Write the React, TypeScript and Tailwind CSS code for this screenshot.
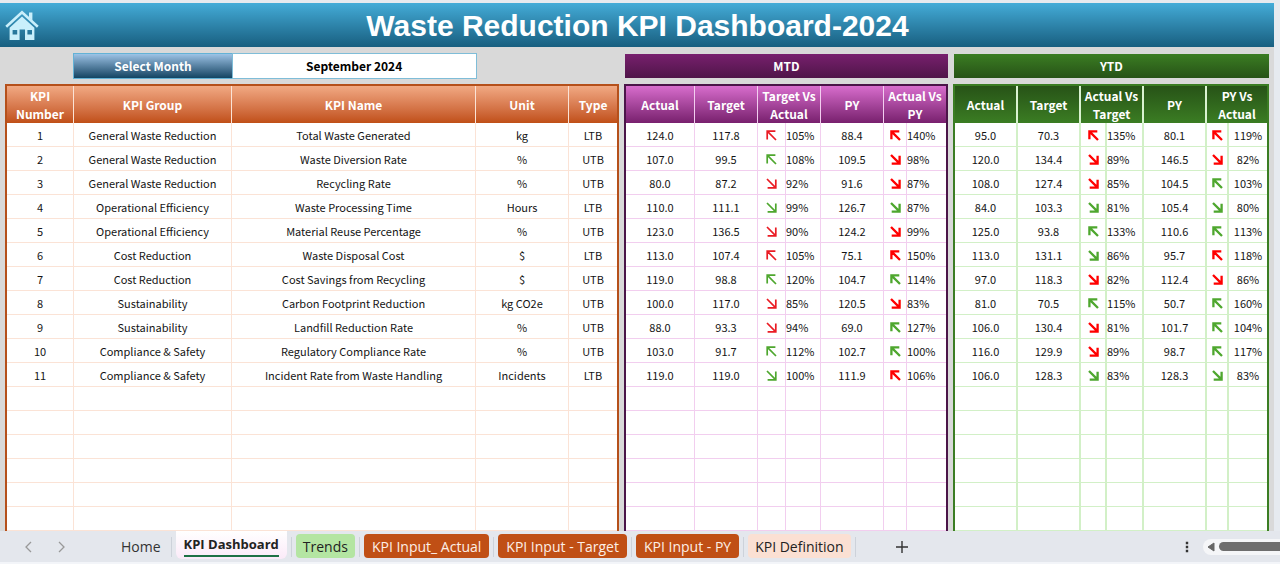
import { useState } from "react";
import clsx from "clsx";

type Trend = { dir: "up" | "down"; good: boolean; value: string };

type Period = {
  actual: string;
  target: string;
  vsTarget: Trend;
  py: string;
  vsPy: Trend;
};

type Kpi = {
  group: string;
  name: string;
  unit: string;
  type: "LTB" | "UTB";
  mtd: Period;
  ytd: Period;
};

const t = (dir: "up" | "down", good: boolean, value: string): Trend => ({
  dir,
  good,
  value,
});

const p = (
  actual: string,
  target: string,
  vsTarget: Trend,
  py: string,
  vsPy: Trend
): Period => ({ actual, target, vsTarget, py, vsPy });

const kpis: Kpi[] = [
  {
    group: "General Waste Reduction",
    name: "Total Waste Generated",
    unit: "kg",
    type: "LTB",
    mtd: p("124.0", "117.8", t("up", false, "105%"), "88.4", t("up", false, "140%")),
    ytd: p("95.0", "70.3", t("up", false, "135%"), "80.1", t("up", false, "119%")),
  },
  {
    group: "General Waste Reduction",
    name: "Waste Diversion Rate",
    unit: "%",
    type: "UTB",
    mtd: p("107.0", "99.5", t("up", true, "108%"), "109.5", t("down", false, "98%")),
    ytd: p("120.0", "134.4", t("down", false, "89%"), "146.5", t("down", false, "82%")),
  },
  {
    group: "General Waste Reduction",
    name: "Recycling Rate",
    unit: "%",
    type: "UTB",
    mtd: p("80.0", "87.2", t("down", false, "92%"), "91.6", t("down", false, "87%")),
    ytd: p("108.0", "127.4", t("down", false, "85%"), "104.5", t("up", true, "103%")),
  },
  {
    group: "Operational Efficiency",
    name: "Waste Processing Time",
    unit: "Hours",
    type: "LTB",
    mtd: p("110.0", "111.1", t("down", true, "99%"), "126.7", t("down", true, "87%")),
    ytd: p("84.0", "103.3", t("down", true, "81%"), "105.4", t("down", true, "80%")),
  },
  {
    group: "Operational Efficiency",
    name: "Material Reuse Percentage",
    unit: "%",
    type: "UTB",
    mtd: p("123.0", "136.5", t("down", false, "90%"), "124.2", t("down", false, "99%")),
    ytd: p("125.0", "93.8", t("up", true, "133%"), "110.6", t("up", true, "113%")),
  },
  {
    group: "Cost Reduction",
    name: "Waste Disposal Cost",
    unit: "$",
    type: "LTB",
    mtd: p("113.0", "107.4", t("up", false, "105%"), "75.1", t("up", false, "150%")),
    ytd: p("113.0", "131.1", t("down", true, "86%"), "95.7", t("up", false, "118%")),
  },
  {
    group: "Cost Reduction",
    name: "Cost Savings from Recycling",
    unit: "$",
    type: "UTB",
    mtd: p("119.0", "98.8", t("up", true, "120%"), "104.7", t("up", true, "114%")),
    ytd: p("97.0", "118.3", t("down", false, "82%"), "112.4", t("down", false, "86%")),
  },
  {
    group: "Sustainability",
    name: "Carbon Footprint Reduction",
    unit: "kg CO2e",
    type: "UTB",
    mtd: p("100.0", "117.0", t("down", false, "85%"), "120.5", t("down", false, "83%")),
    ytd: p("81.0", "70.5", t("up", true, "115%"), "50.7", t("up", true, "160%")),
  },
  {
    group: "Sustainability",
    name: "Landfill Reduction Rate",
    unit: "%",
    type: "UTB",
    mtd: p("88.0", "93.3", t("down", false, "94%"), "69.0", t("up", true, "127%")),
    ytd: p("106.0", "130.4", t("down", false, "81%"), "101.7", t("up", true, "104%")),
  },
  {
    group: "Compliance & Safety",
    name: "Regulatory Compliance Rate",
    unit: "%",
    type: "UTB",
    mtd: p("103.0", "91.7", t("up", true, "112%"), "102.7", t("up", true, "100%")),
    ytd: p("116.0", "129.9", t("down", false, "89%"), "98.7", t("up", true, "117%")),
  },
  {
    group: "Compliance & Safety",
    name: "Incident Rate from Waste Handling",
    unit: "Incidents",
    type: "LTB",
    mtd: p("119.0", "119.0", t("down", true, "100%"), "111.9", t("up", false, "106%")),
    ytd: p("106.0", "128.3", t("down", true, "83%"), "128.3", t("down", true, "83%")),
  },
];

const TOTAL_ROWS = 17;
const rows: (Kpi | null)[] = Array.from(
  { length: TOTAL_ROWS },
  (_, i) => kpis[i] ?? null
);

const HomeIcon = () => (
  <svg viewBox="0 0 34 31" className="w-[34px] h-[31px]" aria-hidden="true">
    <path
      d="M1.2 16.8 17 2.2 32.8 16.8"
      fill="none"
      stroke="#c9effb"
      strokeWidth="2.6"
    />
    <path d="M24 2.5h3.4v8.2L24 7.5z" fill="#c9effb" />
    <path
      d="M17 6.4 29.4 17.8V30H20V19.5h-5.4V30H4.6V17.8zM7.6 20v4.6h4.6V20zM22.4 20v4.6H27V20z"
      fill="#c9effb"
      fillRule="evenodd"
    />
  </svg>
);

const TrendArrow = ({ trend, bold }: { trend: Trend; bold: boolean }) => (
  <span className="flex justify-center pt-0.5">
    <svg
      viewBox="0 0 11 11"
      className={clsx("w-[11px] h-[11px]", trend.dir === "down" && "rotate-180")}
      role="img"
      aria-label={trend.dir}
    >
      <path
        d={bold ? "M1.4 9.3V1.4H9.3M1.6 1.6 10 10" : "M1.2 9.4V1.2H9.4M1.2 1.2 10 10"}
        fill="none"
        stroke={trend.good ? "#4ea72e" : bold ? "#ff0000" : "#ea1c24"}
        strokeWidth={bold ? 2.3 : 1.7}
      />
    </svg>
  </span>
);

const theme = {
  mtd: {
    box: "border-[#4b1549]",
    title: "from-[#78206e] to-[#501549]",
    th: "from-[#d86dcd] to-[#78206e] border-r border-[#f2ceef]",
    td: "border-r border-[#f2ceef]",
    cols: [
      "w-[69px]",
      "w-[63px]",
      "w-[28px]",
      "w-[35px]",
      "w-[63px]",
      "w-[23px]",
      "w-[39px]",
    ],
    headings: ["Actual", "Target", "Target Vs Actual", "PY", "Actual Vs PY"],
  },
  ytd: {
    box: "border-[#3b7d23]",
    title: "from-[#3b7d23] to-[#275317]",
    th: "from-[#275317] to-[#3b7d23] border-r-2 border-[#d9f2d0]",
    td: "border-r-2 border-[#d2f0c7]",
    cols: [
      "w-[63px]",
      "w-[63px]",
      "w-[26px]",
      "w-[37px]",
      "w-[63px]",
      "w-[22px]",
      "w-[38px]",
    ],
    headings: ["Actual", "Target", "Actual Vs Target", "PY", "PY Vs Actual"],
  },
};

const BOX = "border-x-2 border-t-2 bg-white";
const TABLE = "w-full table-fixed border-separate border-spacing-0 text-center";
const TH =
  "h-[37px] p-0 last:border-r-0 bg-linear-to-b text-white text-[12px] leading-[18px] font-bold";
const TD =
  "h-6 p-0 border-b last:border-r-0 text-[11px] leading-[16px] text-[#141414] whitespace-nowrap";
const BANNER =
  "flex items-center justify-center h-6 mt-px ml-px text-white text-[12px] font-bold bg-linear-to-b";

const KpiTable = () => (
  <div className={clsx(BOX, "border-[#b5501b]")}>
    <table className={TABLE}>
      <colgroup>
        <col className="w-[67px]" />
        <col className="w-[158px]" />
        <col className="w-[244px]" />
        <col className="w-[93px]" />
        <col className="w-[48px]" />
      </colgroup>
      <thead>
        <tr>
          {["KPI Number", "KPI Group", "KPI Name", "Unit", "Type"].map((h) => (
            <th
              key={h}
              className={clsx(
                TH,
                "from-[#f1a983] to-[#c04f15] border-r border-[#fbe3d6]"
              )}
            >
              {h}
            </th>
          ))}
        </tr>
      </thead>
      <tbody>
        {rows.map((row, i) => {
          const cells = row
            ? [i + 1, row.group, row.name, row.unit, row.type]
            : ["", "", "", "", ""];
          return (
            <tr key={i}>
              {cells.map((cell, j) => (
                <td key={j} className={clsx(TD, "border-r border-[#fbe3d6]")}>
                  {cell}
                </td>
              ))}
            </tr>
          );
        })}
      </tbody>
    </table>
  </div>
);

const PeriodTable = ({ period }: { period: "mtd" | "ytd" }) => {
  const style = theme[period];
  const td = clsx(TD, style.td);
  return (
    <div className={clsx(BOX, style.box)}>
      <table className={TABLE}>
        <colgroup>
          {style.cols.map((c, i) => (
            <col key={i} className={c} />
          ))}
        </colgroup>
        <thead>
          <tr>
            {style.headings.map((h) => (
              <th
                key={h}
                colSpan={h.includes("Vs") ? 2 : 1}
                className={clsx(TH, style.th)}
              >
                {h}
              </th>
            ))}
          </tr>
        </thead>
        <tbody>
          {rows.map((row, i) => {
            const data = row?.[period];
            return (
              <tr key={i}>
                <td className={td}>{data?.actual}</td>
                <td className={td}>{data?.target}</td>
                <td className={td}>
                  {data && (
                    <TrendArrow trend={data.vsTarget} bold={period === "ytd"} />
                  )}
                </td>
                <td className={clsx(td, "text-left")}>{data?.vsTarget.value}</td>
                <td className={td}>{data?.py}</td>
                <td className={td}>
                  {data && <TrendArrow trend={data.vsPy} bold />}
                </td>
                <td className={clsx(td, period === "mtd" && "text-left")}>
                  {data?.vsPy.value}
                </td>
              </tr>
            );
          })}
        </tbody>
      </table>
    </div>
  );
};

const tabs = [
  { name: "Home", color: "text-[#333333] pl-3 pr-[6px]" },
  { name: "KPI Dashboard", color: "" },
  { name: "Trends", color: "bg-[#b4e5a2] text-[#222222] px-[7px]" },
  { name: "KPI Input_ Actual", color: "bg-[#c04f15] text-[#fdeee6] px-2" },
  { name: "KPI Input - Target", color: "bg-[#c04f15] text-[#fdeee6] px-2" },
  { name: "KPI Input - PY", color: "bg-[#c04f15] text-[#fdeee6] px-2" },
  { name: "KPI Definition", color: "bg-[#fbe0d3] text-[#222222] px-[7px]" },
];

const SheetTabs = () => (
  <nav className="flex items-center h-[31px] bg-[#e4e7ed] font-['Open_Sans','Noto_Sans',sans-serif] text-[14px] text-[#333333]">
    <div className="flex w-[109px] shrink-0 gap-6 pl-6">
      <button aria-label="Previous sheet">
        <svg viewBox="0 0 9 12" className="w-[9px] h-3" aria-hidden="true">
          <path d="M7 1 2 6l5 5" fill="none" stroke="#999" strokeWidth="1.3" />
        </svg>
      </button>
      <button aria-label="Next sheet">
        <svg viewBox="0 0 9 12" className="w-[9px] h-3" aria-hidden="true">
          <path d="M2 1l5 5-5 5" fill="none" stroke="#999" strokeWidth="1.3" />
        </svg>
      </button>
    </div>
    <div className="flex items-center gap-1 h-full">
      {tabs.map((tab) => (
        <div
          key={tab.name}
          className="flex items-center gap-1 h-full shrink-0"
        >
          {tab.name === "KPI Dashboard" ? (
            <button className="h-7 self-start px-2 rounded-b-md bg-linear-to-b from-white to-[#fbeaf8] text-[13px] text-[#222222] font-bold whitespace-nowrap">
              <span className="block border-b-2 border-[#1e7145] leading-[22px]">
                {tab.name}
              </span>
            </button>
          ) : (
            <button
              className={clsx(
                "h-6 mt-[3px] self-start rounded-[4px] whitespace-nowrap",
                tab.color
              )}
            >
              {tab.name}
            </button>
          )}
          <span className="w-px h-5 bg-[#cdd2da]" />
        </div>
      ))}
    </div>
    <button aria-label="New sheet" className="ml-10">
      <svg viewBox="0 0 12 12" className="w-3 h-3" aria-hidden="true">
        <path d="M6 0v12M0 6h12" stroke="#333" strokeWidth="1.4" />
      </svg>
    </button>
    <button aria-label="More" className="ml-auto mr-[14px]">
      <svg viewBox="0 0 4 12" className="w-1 h-3" aria-hidden="true">
        <path d="M.8.8h2.4v2.4H.8zM.8 4.8h2.4v2.4H.8zM.8 8.8h2.4v2.4H.8z" fill="#333" />
      </svg>
    </button>
    <div className="flex items-center gap-1 w-[77px] h-4 pl-1 rounded-l-full bg-[#f5f6f8]">
      <svg viewBox="0 0 8 10" className="w-2 h-[10px]" aria-hidden="true">
        <path d="M7 1v8L1 5z" fill="#666" stroke="#666" strokeLinejoin="round" />
      </svg>
      <div className="grow h-[9px] rounded-l-full bg-[#6e6e6e]" />
    </div>
  </nav>
);

const App = () => {
  const [month, setMonth] = useState("September 2024");
  return (
    <div className="min-h-screen bg-[#f3f5f9] font-['Noto_Sans_CJK_SC','Noto_Sans',sans-serif]">
      <div className="bg-[#e6eaef] pr-[6px]">
        <div className="bg-[#d9d9d9] border-t-3 border-[#e6eaef]">
          <header className="grid grid-cols-[40px_1fr_40px] items-center h-11 pl-[5px] bg-linear-to-b from-[#44acd8] to-[#185f80]">
            <a href="#home" aria-label="Home">
              <HomeIcon />
            </a>
            <h1 className="pt-0.5 pr-1 text-center text-white text-[30px] leading-9 font-bold font-['Liberation_Sans',sans-serif] whitespace-nowrap">
              Waste Reduction KPI Dashboard-2024
            </h1>
          </header>

          <main className="grid grid-cols-[612fr_324fr_316fr] gap-[5px] pl-[5px] pr-[7px] pt-[6px]">
            <div className="grid grid-cols-[68fr_158fr_244fr_142fr] h-[26px]">
              <label
                htmlFor="month"
                className="col-start-2 flex items-center justify-center border border-[#63b2d6] border-r-0 bg-linear-to-b from-[#9dc3e6] to-[#124563] text-white text-[12px] font-bold"
              >
                Select Month
              </label>
              <select
                id="month"
                value={month}
                onChange={(e) => setMonth(e.target.value)}
                className="appearance-none border border-[#7fbdd8] bg-white text-black text-[12px] font-bold text-center [text-align-last:center]"
              >
                <option>August 2024</option>
                <option>September 2024</option>
                <option>October 2024</option>
              </select>
            </div>
            <h2 className={clsx(BANNER, theme.mtd.title)}>MTD</h2>
            <h2 className={clsx(BANNER, theme.ytd.title)}>YTD</h2>

            <KpiTable />
            <PeriodTable period="mtd" />
            <PeriodTable period="ytd" />
          </main>
        </div>
      </div>
      <SheetTabs />
    </div>
  );
};

export default App;
